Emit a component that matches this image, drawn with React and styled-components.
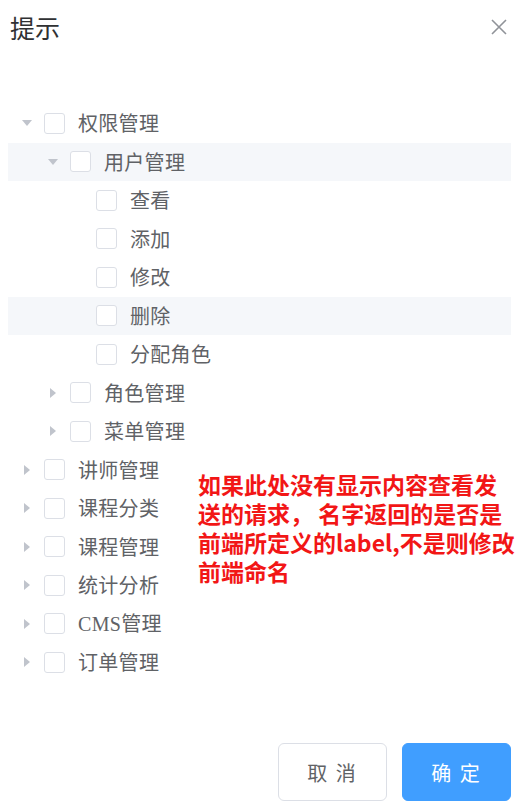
import React from 'react';
import styled, { createGlobalStyle } from 'styled-components';

const GlobalStyle = createGlobalStyle`
  html, body {
    margin: 0;
    padding: 0;
    background: #fff;
  }
  body {
    font-family: "Noto Sans CJK SC", "Noto Sans", sans-serif;
  }
`;

const Dialog = styled.div`
  position: relative;
  width: 523px;
  height: 804px;
  display: flex;
  flex-direction: column;
  background: #fff;
  box-sizing: border-box;
`;

const Header = styled.div`
  display: flex;
  align-items: center;
  justify-content: space-between;
  height: 54px;
  padding: 0 16px 0 10px;
`;

const Title = styled.span`
  font-size: 25px;
  line-height: 25px;
  color: #303133;
  font-family: "Noto Sans CJK SC", sans-serif;
`;

const CloseBtn = styled.button`
  border: 0;
  background: transparent;
  padding: 0;
  width: 16px;
  height: 16px;
  display: flex;
  cursor: pointer;
`;

const Body = styled.div`
  flex: 1;
  padding: 50px 12px 0 8px;
`;

const Row = styled.div`
  display: flex;
  align-items: center;
  height: 38.5px;
  padding-left: ${(p) => 8 + p.level * 26}px;
  background: ${(p) => (p.active ? '#f5f7fa' : 'transparent')};
`;

const Arrow = styled.span`
  width: 22px;
  height: 22px;
  display: flex;
  align-items: center;
  justify-content: center;
  flex-shrink: 0;
`;

const Box = styled.span`
  width: 19px;
  height: 19px;
  margin-left: 6px;
  border: 1px solid #dcdfe6;
  border-radius: 3px;
  background: #fff;
  flex-shrink: 0;
`;

const Label = styled.span`
  margin-left: 13px;
  font-size: 20px;
  line-height: 20px;
  color: #606266;
  letter-spacing: 0.3px;
  font-family: ${(p) => (p.serif ? '"Liberation Serif", "Noto Sans CJK SC", serif' : 'inherit')};
`;

const Note = styled.div`
  position: absolute;
  left: 198px;
  top: 470px;
  font-size: 23px;
  line-height: 29px;
  font-weight: 700;
  color: #f21616;
  white-space: pre;
`;

const Footer = styled.div`
  display: flex;
  justify-content: flex-end;
  gap: 15px;
  padding: 0 12px 3px 0;
`;

const Button = styled.button`
  width: 109px;
  height: 58px;
  border-radius: 6px;
  font-family: "Noto Sans CJK SC", sans-serif;
  font-size: 20px;
  letter-spacing: 2px;
  cursor: pointer;
  border: 1px solid ${(p) => (p.primary ? '#409eff' : '#dcdfe6')};
  background: ${(p) => (p.primary ? '#409eff' : '#fff')};
  color: ${(p) => (p.primary ? '#fff' : '#606266')};
`;

const tree = [
  { label: '权限管理', level: 0, arrow: 'down' },
  { label: '用户管理', level: 1, arrow: 'down', active: true },
  { label: '查看', level: 2 },
  { label: '添加', level: 2 },
  { label: '修改', level: 2 },
  { label: '删除', level: 2, active: true },
  { label: '分配角色', level: 2 },
  { label: '角色管理', level: 1, arrow: 'right' },
  { label: '菜单管理', level: 1, arrow: 'right' },
  { label: '讲师管理', level: 0, arrow: 'right' },
  { label: '课程分类', level: 0, arrow: 'right' },
  { label: '课程管理', level: 0, arrow: 'right' },
  { label: '统计分析', level: 0, arrow: 'right' },
  { label: 'CMS管理', level: 0, arrow: 'right', serif: true },
  { label: '订单管理', level: 0, arrow: 'right' },
];

const Caret = ({ dir }) => {
  if (!dir) return null;
  return dir === 'down' ? (
    <svg width="10" height="6" viewBox="0 0 10 6">
      <path d="M0 0 L10 0 L5 6 Z" fill="#c0c4cc" />
    </svg>
  ) : (
    <svg width="6" height="10" viewBox="0 0 6 10">
      <path d="M0 0 L6 5 L0 10 Z" fill="#c0c4cc" />
    </svg>
  );
};

const App = () => {
  return (
    <Dialog>
      <GlobalStyle />
      <Header>
        <Title>提示</Title>
        <CloseBtn aria-label="close">
          <svg width="16" height="16" viewBox="0 0 16 16">
            <path d="M1 1 L15 15 M15 1 L1 15" stroke="#909399" strokeWidth="1.6" />
          </svg>
        </CloseBtn>
      </Header>
      <Body>
        {tree.map((node, i) => (
          <Row key={i} level={node.level} active={node.active}>
            <Arrow>
              <Caret dir={node.arrow} />
            </Arrow>
            <Box />
            <Label serif={node.serif}>{node.label}</Label>
          </Row>
        ))}
      </Body>
      <Footer>
        <Button>取 消</Button>
        <Button primary>确 定</Button>
      </Footer>
      <Note>{'如果此处没有显示内容查看发\n送的请求， 名字返回的是否是\n前端所定义的label,不是则修改\n前端命名'}</Note>
    </Dialog>
  );
};

export default App;
